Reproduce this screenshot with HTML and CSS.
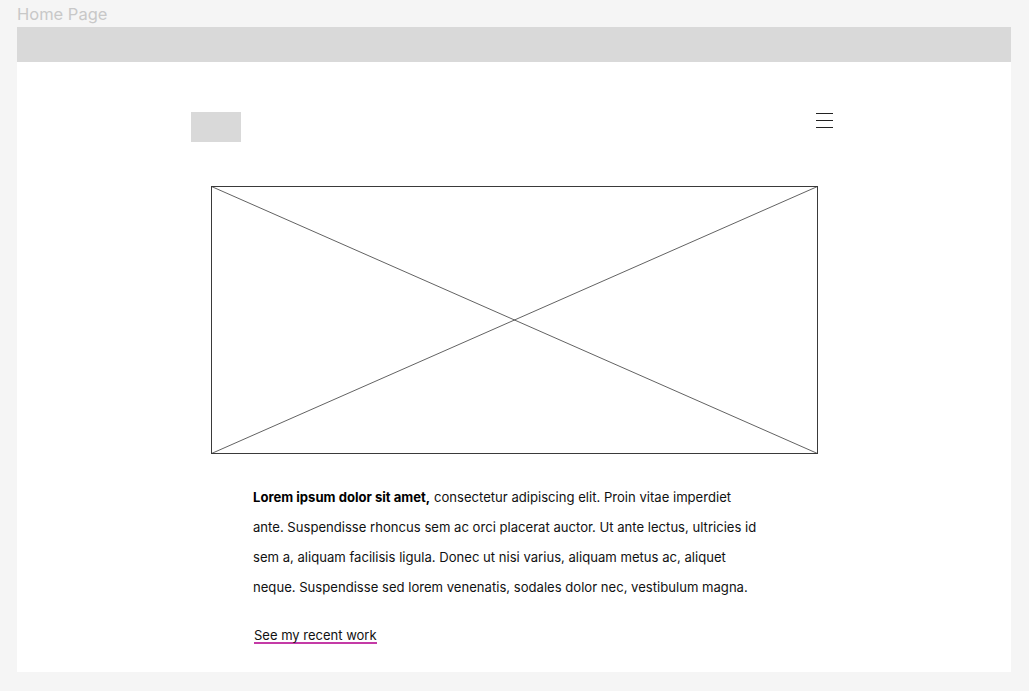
FILE: index.html
```html
<!DOCTYPE html>
<html>
<head>
<meta charset="utf-8">
<link rel="stylesheet" href="styles.css">
</head>
<body>
<div class="title">Home Page</div>
<div class="frame">
  <div class="topbar"></div>
  <div class="page">
    <div class="header">
      <div class="logo"></div>
      <div class="burger"><span></span><span></span><span></span></div>
    </div>
    <svg class="hero" width="607" height="268" viewBox="0 0 607 268">
      <rect x="0.5" y="0.5" width="606" height="267" fill="none" stroke="#3a3a3a" stroke-width="1"/>
      <line x1="0.5" y1="0.5" x2="606.5" y2="267.5" stroke="#3a3a3a" stroke-width="0.8"/>
      <line x1="606.5" y1="0.5" x2="0.5" y2="267.5" stroke="#3a3a3a" stroke-width="0.8"/>
    </svg>
    <p class="text"><b>Lorem ipsum dolor sit amet,</b> consectetur adipiscing elit. Proin vitae imperdiet ante. Suspendisse rhoncus sem ac orci placerat auctor. Ut ante lectus, ultricies id sem a, aliquam facilisis ligula. Donec ut nisi varius, aliquam metus ac, aliquet neque. Suspendisse sed lorem venenatis, sodales dolor nec, vestibulum magna.</p>
    <a class="link" href="#">See my recent work</a>
  </div>
</div>
</body>
</html>
```

FILE: styles.css
```css
html, body {
  margin: 0;
  padding: 0;
  background: #f5f5f5;
  font-family: Inter, "Liberation Sans", sans-serif;
}
.title {
  height: 27px;
  padding-left: 17px;
  font-size: 16.5px;
  line-height: 28px;
  color: #c8c8c8;
}
.frame {
  margin-left: 17px;
  width: 994px;
}
.topbar {
  height: 35px;
  background: #d9d9d9;
}
.page {
  background: #fff;
  height: 610px;
  display: flex;
  flex-direction: column;
  align-items: flex-start;
}
.header {
  margin: 50px 0 0 174px;
  width: 642px;
  height: 30px;
  display: flex;
  justify-content: space-between;
  align-items: flex-start;
}
.logo {
  width: 50px;
  height: 30px;
  background: #d9d9d9;
}
.burger {
  width: 17px;
  display: flex;
  flex-direction: column;
  gap: 6px;
  padding-top: 1px;
}
.burger span {
  display: block;
  height: 1px;
  background: #222;
}
.hero {
  display: block;
  margin: 44px 0 0 194px;
}
.text {
  margin: 28px 0 0 236px;
  width: 508px;
  font-size: 13.1px;
  line-height: 30px;
  color: #111;
}
.text b {
  font-weight: 700;
  color: #000;
}
.link {
  margin: 27px 0 0 237px;
  font-size: 13px;
  color: #111;
  text-decoration: none;
  border-bottom: 2px solid #c43aa6;
  line-height: 13px;
}
```
